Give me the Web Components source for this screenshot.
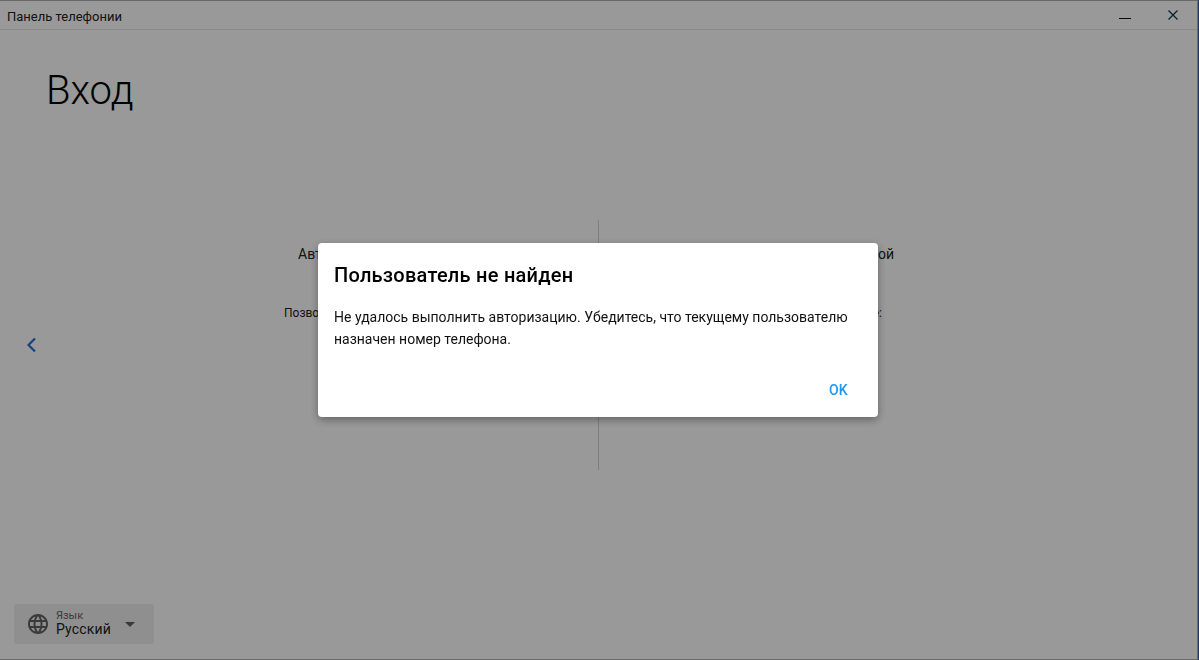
<!DOCTYPE html>
<html lang="ru">
<head>
<meta charset="utf-8">
<title>Панель телефонии</title>
<style>
  html, body { margin: 0; height: 100%; overflow: hidden; }
  body { font-family: Roboto, "Liberation Sans", sans-serif; background: #1d3f66; color: #000; }
</style>
</head>
<body>
<app-window>
  <title-bar>Панель телефонии</title-bar>
  <login-page>
    <lang-select slot="footer"></lang-select>
  </login-page>
</app-window>
<alert-dialog heading="Пользователь не найден" action="OK">
  Не удалось выполнить авторизацию. Убедитесь, что текущему пользователю назначен номер телефона.
</alert-dialog>

<script>
class AppWindow extends HTMLElement {
    constructor() {
        super();
        this.attachShadow({mode: 'open'});
    }

    connectedCallback() {
        this.shadowRoot.innerHTML = `
      <style>
        :host {
          display: flex;
          flex-direction: column;
          box-sizing: border-box;
          width: 1198px;
          height: 660px;
          border: 1px solid #b0b0b0;
          border-left: 0;
          background: #fff;
        }
      </style>
      <slot></slot>
    `;
    }
}

class TitleBar extends HTMLElement {
    constructor() {
        super();
        this.attachShadow({mode: 'open'});
    }

    connectedCallback() {
        this.shadowRoot.innerHTML = `
      <style>
        :host {
          display: flex;
          align-items: center;
          flex: none;
          height: 28px;
          padding-left: 7px;
          border-bottom: 1px solid #e6e6e6;
          font-size: 13px;
          color: #222;
        }
        .title { margin-right: auto; padding-top: 2px; }
        button {
          display: flex;
          align-items: center;
          justify-content: center;
          width: 48px;
          height: 28px;
          padding: 0;
          border: 0;
          background: none;
        }
        svg { display: block; }
      </style>
      <span class="title"><slot></slot></span>
      <button aria-label="Свернуть">
        <svg width="14" height="14" viewBox="0 0 14 14"><path d="M1 10.5h12" stroke="#111" stroke-width="1"/></svg>
      </button>
      <button aria-label="Закрыть">
        <svg width="14" height="14" viewBox="0 0 14 14"><path d="M2.5 2.5l9 9M11.5 2.5l-9 9" stroke="#0a3c46" stroke-width="1.3" fill="none"/></svg>
      </button>
    `;
    }
}

class LoginPage extends HTMLElement {
    constructor() {
        super();
        this.attachShadow({mode: 'open'});
    }

    connectedCallback() {
        this.shadowRoot.innerHTML = `
      <style>
        :host {
          display: grid;
          grid-template-rows: 1fr auto 1fr;
          flex: 1;
          min-height: 0;
        }
        h1 {
          margin: 0;
          padding: 37px 0 0 46px;
          font-size: 40px;
          line-height: 48px;
          font-weight: 300;
          color: #000;
        }
        .middle {
          display: grid;
          grid-template-columns: 1fr 629px 1fr;
          align-items: center;
        }
        .back { padding-left: 26px; }
        .back svg { display: block; }
        .columns {
          display: grid;
          grid-template-columns: 1fr 1px 1fr;
          height: 250px;
        }
        .divider { background: #d4d4d4; }
        .col { padding-top: 25px; font-size: 12px; color: #222; }
        .col h2 { margin: 0 0 42px; font-size: 14px; line-height: 18px; font-weight: 400; }
        .col p { margin: 0; line-height: 16px; }
        .left h2 { padding-left: 14px; }
        .right { padding-right: 19px; text-align: right; }
        .right p { padding-right: 12px; }
        .footer { align-self: end; padding: 0 0 15px 14px; }
      </style>
      <h1>Вход</h1>
      <div class="middle">
        <div class="back">
          <svg width="12" height="16" viewBox="0 0 12 16"><path d="M9 1.5L2.5 8 9 14.5" stroke="#2a6fd0" stroke-width="2.2" fill="none"/></svg>
        </div>
        <div class="columns">
          <div class="col left"><h2>Авт</h2><p>Позво</p></div>
          <div class="divider"></div>
          <div class="col right"><h2>ой</h2><p>е:</p></div>
        </div>
        <div></div>
      </div>
      <div class="footer"><slot name="footer"></slot></div>
    `;
    }
}

class LangSelect extends HTMLElement {
    constructor() {
        super();
        this.attachShadow({mode: 'open'});
    }

    connectedCallback() {
        this.shadowRoot.innerHTML = `
      <style>
        :host {
          display: flex;
          align-items: center;
          box-sizing: border-box;
          width: 140px;
          height: 40px;
          padding: 0 19px 0 12px;
          border-radius: 3px;
          background: #eeeeee;
        }
        svg { display: block; flex: none; }
        .text { flex: 1; margin-left: 6px; margin-top: -1px; }
        .label { font-size: 11px; line-height: 11px; color: #666; }
        .value { font-size: 14px; line-height: 16px; letter-spacing: .15px; color: #222; }
      </style>
      <svg width="24" height="24" viewBox="0 0 24 24"><path fill="#616161" d="M11.99 2C6.47 2 2 6.48 2 12s4.47 10 9.99 10C17.52 22 22 17.52 22 12S17.52 2 11.99 2zm6.93 6h-2.95c-.32-1.25-.78-2.45-1.38-3.56 1.84.63 3.37 1.91 4.33 3.56zM12 4.04c.83 1.2 1.48 2.53 1.91 3.96h-3.82c.43-1.43 1.08-2.76 1.91-3.96zM4.26 14C4.1 13.36 4 12.69 4 12s.1-1.36.26-2h3.38c-.08.66-.14 1.32-.14 2 0 .68.06 1.34.14 2H4.26zm.82 2h2.95c.32 1.25.78 2.45 1.38 3.56-1.84-.63-3.37-1.9-4.33-3.56zm2.95-8H5.08c.96-1.66 2.49-2.93 4.33-3.56C8.81 5.55 8.35 6.75 8.03 8zM12 19.96c-.83-1.2-1.48-2.53-1.91-3.96h3.82c-.43 1.43-1.08 2.76-1.91 3.96zM14.34 14H9.66c-.09-.66-.16-1.32-.16-2 0-.68.07-1.35.16-2h4.68c.09.65.16 1.32.16 2 0 .68-.07 1.34-.16 2zm.25 5.56c.6-1.11 1.06-2.31 1.38-3.56h2.95c-.96 1.65-2.49 2.93-4.33 3.56zM16.36 14c.08-.66.14-1.32.14-2 0-.68-.06-1.34-.14-2h3.38c.16.64.26 1.31.26 2s-.1 1.36-.26 2h-3.38z"/></svg>
      <div class="text">
        <div class="label">Язык</div>
        <div class="value">Русский</div>
      </div>
      <svg width="10" height="5" viewBox="0 0 10 5"><path fill="#616161" d="M0 0h10L5 5z"/></svg>
    `;
    }
}

class AlertDialog extends HTMLElement {
    constructor() {
        super();
        this.attachShadow({mode: 'open'});
    }

    connectedCallback() {
        this.shadowRoot.innerHTML = `
      <style>
        :host {
          position: fixed;
          inset: 0 1px 0 0;
          display: flex;
          align-items: center;
          justify-content: center;
          padding-right: 2px;
          background: rgba(0, 0, 0, .4);
        }
        .box {
          box-sizing: border-box;
          width: 560px;
          height: 174px;
          padding: 20px 16px 0;
          display: flex;
          flex-direction: column;
          border-radius: 4px;
          background: #fff;
          box-shadow: 0 3px 8px rgba(0, 0, 0, .35);
        }
        h2 {
          margin: 0 0 19px;
          font-size: 20px;
          line-height: 24px;
          font-weight: 500;
          letter-spacing: .25px;
          color: #000;
        }
        p {
          margin: 0;
          font-size: 14px;
          line-height: 22px;
          color: #111;
        }
        .actions {
          display: flex;
          justify-content: flex-end;
          margin-top: auto;
          padding: 0 14px 18px 0;
        }
        button {
          padding: 0;
          border: 0;
          background: none;
          font: 500 14px/18px Roboto, "Liberation Sans", sans-serif;
          letter-spacing: .3px;
          color: #2196f3;
        }
      </style>
      <div class="box" role="dialog">
        <h2>${this.getAttribute('heading')}</h2>
        <p><slot></slot></p>
        <div class="actions"><button>${this.getAttribute('action')}</button></div>
      </div>
    `;
    }
}

customElements.define('app-window', AppWindow);
customElements.define('title-bar', TitleBar);
customElements.define('login-page', LoginPage);
customElements.define('lang-select', LangSelect);
customElements.define('alert-dialog', AlertDialog);
</script>
</body>
</html>
